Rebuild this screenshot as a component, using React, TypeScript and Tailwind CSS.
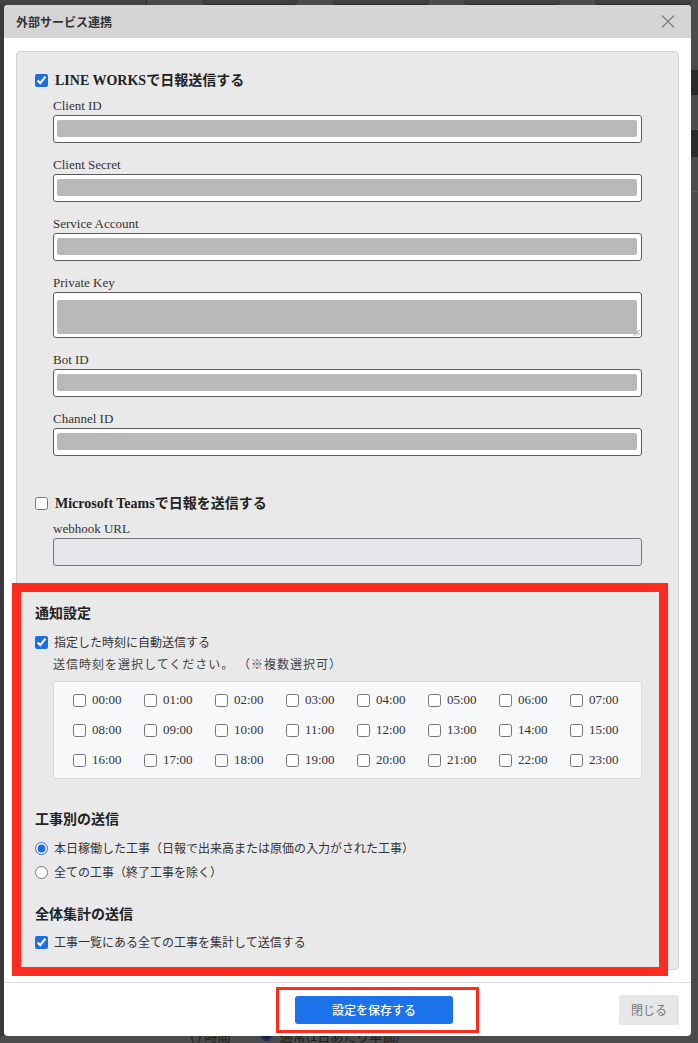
import React from "react";

const HOURS = Array.from({ length: 24 }, (_, i) => `${String(i).padStart(2, "0")}:00`);

const LINE_FIELDS = [
  { label: "Client ID" },
  { label: "Client Secret" },
  { label: "Service Account" },
  { label: "Private Key", tall: true },
  { label: "Bot ID" },
  { label: "Channel ID" },
];

const serif = "font-['Liberation_Serif','Noto_Sans_CJK_JP',serif]";

const CloseIcon = () => (
  <svg width="14" height="13" viewBox="0 0 14 13" fill="none">
    <path d="M1 0.5L13 12.5M13 0.5L1 12.5" stroke="#7b7b7b" strokeWidth="1.1" />
  </svg>
);

const RedactedField = ({ label, tall }: { label: string; tall?: boolean }) => (
  <div className="mt-[14px] first:mt-[8px]">
    <div className={`${serif} text-[13px] leading-[16px] text-[#333] mb-[1px]`}>{label}</div>
    {tall ? (
      <div className="relative h-[46px] rounded-[3px] border border-[#5c5c5c] bg-white pl-[3px] pr-[4px] pt-[7px] pb-[4px]">
        <div className="h-[34px] rounded-[2px] bg-[#b9b9b9]" />
        <svg className="absolute right-[1px] bottom-[1px]" width="7" height="7" viewBox="0 0 7 7">
          <path d="M6.5 1L1 6.5M6.5 4L4 6.5" stroke="#777" strokeWidth="0.9" />
        </svg>
      </div>
    ) : (
      <div className="h-[28px] rounded-[3px] border border-[#5c5c5c] bg-white pl-[3px] pr-[4px] pt-[4px] pb-[5px]">
        <div className="h-full rounded-[2px] bg-[#b9b9b9]" />
      </div>
    )}
  </div>
);

const TimeCell = ({ time }: { time: string }) => (
  <label className="flex h-[20px] items-center gap-[6px]">
    <input type="checkbox" className="h-[13px] w-[13px] accent-[#1b6fe0]" />
    <span className={`${serif} text-[13px] text-[#333]`}>{time}</span>
  </label>
);

function Modal() {
  return (
    <div className="flex h-[1031px] w-[687px] flex-col overflow-hidden rounded-[4px] bg-white">
      <div className="flex h-[33px] items-center justify-between bg-[#d5d5d5] pl-[12px] pr-[16px]">
        <span className="text-[12px] font-bold text-[#333]">外部サービス連携</span>
        <CloseIcon />
      </div>

      <div className="flex flex-1 flex-col px-[12px] pt-[13px] pb-[12px]">
        <div className="flex-1 rounded-[4px] border border-[#d2d2d2] bg-[#e9e9e9] pl-[18px] pr-[36px] pt-[18px]">
          <label className="flex h-[20px] items-center gap-[7px]">
            <input type="checkbox" defaultChecked className="h-[13px] w-[13px] accent-[#1b6fe0]" />
            <span className={`${serif} text-[14px] font-bold text-[#222]`}>LINE WORKSで日報送信する</span>
          </label>
          <div className="ml-[18px]">
            {LINE_FIELDS.map((f) => (
              <RedactedField key={f.label} label={f.label} tall={f.tall} />
            ))}
          </div>

          <label className="mt-[37px] flex h-[20px] items-center gap-[7px]">
            <input type="checkbox" className="h-[13px] w-[13px] accent-[#1b6fe0]" />
            <span className={`${serif} text-[14px] font-bold text-[#222]`}>Microsoft Teamsで日報を送信する</span>
          </label>
          <div className="ml-[18px] mt-[8px]">
            <div className={`${serif} text-[13px] leading-[16px] text-[#333] mb-[1px]`}>webhook URL</div>
            <div className="h-[28px] rounded-[3px] border border-[#7a7a7a] bg-[#e4e6ea]" />
          </div>

          <div className="mt-[36px] text-[14px] leading-[20px] font-bold text-[#222]">通知設定</div>
          <label className="mt-[10px] flex h-[20px] items-center gap-[6px]">
            <input type="checkbox" defaultChecked className="h-[13px] w-[13px] accent-[#1b6fe0]" />
            <span className="text-[12px] text-[#333]">指定した時刻に自動送信する</span>
          </label>
          <div className="ml-[18px] mt-[4px] text-[12px] leading-[16px] tracking-[1px] text-[#444]">
            送信時刻を選択してください。 （※複数選択可）
          </div>
          <div className="ml-[18px] mt-[9px] grid grid-cols-8 gap-y-[10px] rounded-[2px] border border-[#dadada] bg-[#f7f8fa] pl-[19px] py-[8px]">
            {HOURS.map((h) => (
              <TimeCell key={h} time={h} />
            ))}
          </div>

          <div className="mt-[29px] text-[14px] leading-[20px] font-bold text-[#222]">工事別の送信</div>
          <label className="mt-[10px] flex h-[20px] items-center gap-[6px]">
            <input type="radio" name="scope" defaultChecked className="h-[13px] w-[13px] accent-[#1b6fe0]" />
            <span className="text-[12px] text-[#333]">本日稼働した工事（日報で出来高または原価の入力がされた工事）</span>
          </label>
          <label className="mt-[4px] flex h-[20px] items-center gap-[6px]">
            <input type="radio" name="scope" className="h-[13px] w-[13px] accent-[#1b6fe0]" />
            <span className="text-[12px] text-[#333]">全ての工事（終了工事を除く）</span>
          </label>

          <div className="mt-[21px] text-[14px] leading-[20px] font-bold text-[#222]">全体集計の送信</div>
          <label className="mt-[9px] flex h-[20px] items-center gap-[6px]">
            <input type="checkbox" defaultChecked className="h-[13px] w-[13px] accent-[#1b6fe0]" />
            <span className="text-[12px] text-[#333]">工事一覧にある全ての工事を集計して送信する</span>
          </label>
        </div>
      </div>

      <div className="flex h-[54px] items-center border-t border-[#dedede] pl-[291px] pr-[12px]">
        <button type="button" className="h-[28px] w-[158px] rounded-[3px] bg-[#1b72ea] text-[12px] font-medium text-white">
          設定を保存する
        </button>
        <button type="button" className="ml-auto h-[30px] w-[60px] rounded-[2px] bg-[#e7e7e7] text-[12px] text-[#777]">
          閉じる
        </button>
      </div>
    </div>
  );
}

export default function App() {
  return (
    <div className="relative h-[1043px] w-full overflow-hidden bg-[#4b4b4b] font-['Noto_Sans_CJK_JP',sans-serif]">
      <div className="flex h-[5px]">
        <div className="w-[147px] border-r border-[#2f2f2f] bg-[#434343]" />
        <div className="flex flex-1 gap-[35px] pl-[55px]">
          <div className="w-[96px] rounded-b-[4px] border-b border-[#2a2a2a] bg-[#3f3f3f]" />
          <div className="w-[96px] rounded-b-[4px] border-b border-[#2a2a2a] bg-[#3f3f3f]" />
          <div className="w-[96px] rounded-b-[4px] border-b border-[#2a2a2a] bg-[#3f3f3f]" />
          <div className="w-[96px] rounded-b-[4px] border-b border-[#2a2a2a] bg-[#3f3f3f]" />
        </div>
      </div>
      <div className="flex">
        <div className="w-[4px] bg-[#3a3a3a]" />
        <Modal />
        <div className="flex flex-1 flex-col">
          <div className="h-[65px]" />
          <div className="h-[25px] bg-[#2a2a2a]" />
          <div className="h-[35px] border-b border-[#5a5a5a]" />
          <div className="h-[27px] bg-[#2a2a2a]" />
          <div className="h-[35px] border-b border-[#5a5a5a]" />
        </div>
      </div>
      <div className="h-[7px] overflow-hidden">
        <div className="-mt-[8px] flex items-center gap-[8px] pl-[190px] text-[13px] leading-[15px] text-[#1c1c1c]">
          <span>( ) 時間</span>
          <span className="ml-[22px] inline-block h-[11px] w-[11px] rounded-full border-[3px] border-[#1c2a55] bg-[#0f1a3a]" />
          <span>通常(1日あたり単価)</span>
        </div>
      </div>

      <div className="pointer-events-none absolute left-[12px] top-[583px] h-[393px] w-[656px] border-[9px] border-[#fe2b20]" />
      <div className="pointer-events-none absolute left-[276px] top-[987px] h-[46px] w-[203px] border-[3px] border-[#fe2b20]" />
    </div>
  );
}
